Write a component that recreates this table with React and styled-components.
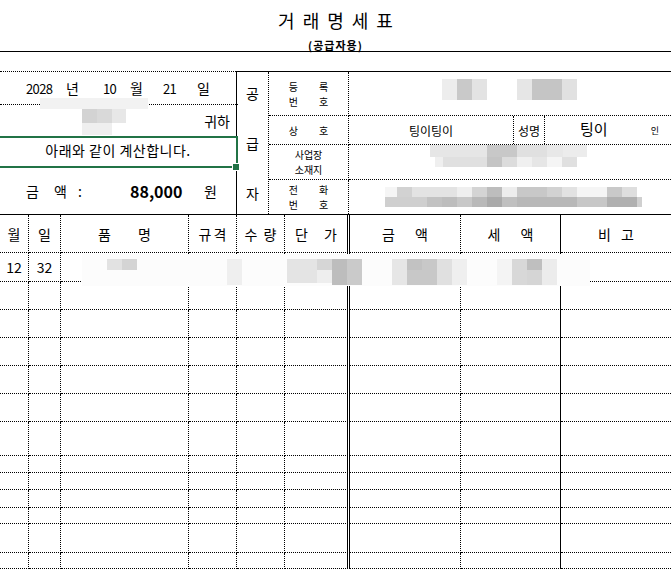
import React from 'react';
import styled, { createGlobalStyle } from 'styled-components';

const GlobalStyle = createGlobalStyle`
  html, body {
    margin: 0;
    padding: 0;
    background: #fff;
  }
  body {
    font-family: "Noto Sans CJK KR", "Noto Sans", sans-serif;
    color: #000;
    overflow: hidden;
  }
  * {
    box-sizing: border-box;
  }
`;

const Page = styled.div`
  position: relative;
  width: 671px;
  height: 569px;
  overflow: hidden;
`;

const TitleBlock = styled.header`
  height: 52px;
  border-bottom: 1px solid #000;
  display: flex;
  flex-direction: column;
  align-items: center;
  padding-top: 9px;
`;

const Title = styled.h1`
  margin: 0;
  padding-left: 8px;
  font-size: 18px;
  line-height: 22px;
  font-weight: 400;
  letter-spacing: 8px;
`;

const Subtitle = styled.div`
  margin-top: 8px;
  font-size: 11px;
  line-height: 13px;
  font-weight: 700;
  letter-spacing: 1px;
`;

const Upper = styled.section`
  margin-top: 19px;
  display: grid;
  grid-template-columns: 236px 1fr;
  border-bottom: 1px solid #000;
`;

const Buyer = styled.div`
  display: grid;
  grid-template-rows: 34px 31px 32px 46px;
  font-size: 14px;
`;

const DateRow = styled.div`
  border-top: 1px dotted #000;
  border-bottom: 1px dotted #000;
  display: grid;
  grid-template-columns: 40px 37px 27px 33px 34px auto;
  align-items: center;
  padding-left: 26px;
`;

const Num = styled.span`
  font-size: 13px;
  letter-spacing: -0.6px;
`;

const Recipient = styled.div`
  display: flex;
  align-items: center;
  justify-content: flex-end;
  padding-right: 8px;
`;

const Notice = styled.div`
  position: relative;
  z-index: 1;
  margin-left: -2px;
  width: 240px;
  border: 2px solid #217346;
  display: flex;
  align-items: center;
  justify-content: center;
  padding-bottom: 4px;
  letter-spacing: 0.5px;

  &::after {
    content: '';
    position: absolute;
    right: -4px;
    bottom: -5px;
    width: 6px;
    height: 6px;
    background: #217346;
    border: 1px solid #fff;
  }
`;

const AmountRow = styled.div`
  display: grid;
  grid-template-columns: 28px 24px 52px 74px auto;
  align-items: center;
  padding-left: 26px;
`;

const Total = styled.span`
  font-size: 16px;
  font-weight: 700;
`;

const Supplier = styled.div`
  border-left: 1px solid #000;
  border-top: 1px solid #000;
  display: grid;
  grid-template-columns: 32px 80px 1fr;
  grid-template-rows: 44px 29px 35px 34px;
`;

const SideLabel = styled.div`
  grid-row: 1 / span 4;
  border-right: 1px dotted #000;
  display: flex;
  flex-direction: column;
  justify-content: space-between;
  align-items: center;
  padding: 13px 0;
  font-size: 14px;
  line-height: 16px;
`;

const Label = styled.div`
  border-right: 1px dotted #000;
  border-bottom: ${(p) => (p.$last ? 'none' : '1px dotted #000')};
  display: flex;
  flex-direction: column;
  align-items: center;
  justify-content: center;
  font-size: 10px;
  line-height: 15px;
`;

const Spread = styled.span`
  display: flex;
  gap: ${(p) => p.$gap}px;
`;

const Value = styled.div`
  border-bottom: ${(p) => (p.$last ? 'none' : '1px dotted #000')};
`;

const NameRow = styled.div`
  height: 100%;
  display: grid;
  grid-template-columns: 165px 31px 1fr;
  font-size: 12px;
`;

const NameCell = styled.div`
  display: flex;
  align-items: center;
  justify-content: ${(p) => p.$align || 'center'};
  border-right: ${(p) => (p.$divider ? '1px dotted #000' : 'none')};
  padding-left: ${(p) => p.$pad || 0}px;
  padding-right: ${(p) => (p.$pad ? 12 : 0)}px;
`;

const Owner = styled.span`
  font-size: 15px;
  margin-bottom: 4px;
`;

const Seal = styled.span`
  margin-left: auto;
  font-size: 9px;
`;

const Table = styled.div`
  display: grid;
  grid-template-columns: 29px 32px 128px 48px 48px 65px 111px 100px 1fr;
  grid-template-rows: ${(p) => p.$rows.map((h) => `${h}px`).join(' ')};
  font-size: 14px;
`;

const edgeStyle = {
  dotted: '1px dotted #000',
  solid: '1px solid #000',
  double: '3px double #000',
  none: 'none',
};

const Cell = styled.div`
  border-bottom: 1px dotted #000;
  border-right: ${(p) => edgeStyle[p.$edge]};
  display: flex;
  align-items: center;
  justify-content: center;
`;

const Redactions = styled.svg`
  position: absolute;
  top: 0;
  left: 0;
  pointer-events: none;
`;

const edges = ['dotted', 'dotted', 'dotted', 'dotted', 'dotted', 'double', 'dotted', 'solid', 'none'];
const rowHeights = [38, 29, 28, 28, 28, 28, 28, 34, 17, 17, 18, 16, 29, 16];

const headers = [
  ['월'],
  ['일'],
  ['품', '명', 27],
  ['규', '격', 2],
  ['수', '량', 6],
  ['단', '가', 16],
  ['금', '액', 20],
  ['세', '액', 20],
  ['비', '고', 10],
];

const firstRow = ['12', '32'];

// pixelated (redacted) areas: x, y, w, h, colour
const blocks = [
  [40, 98, 108, 11, '#f2f2f2'],
  [82, 109, 15, 14, '#d3d3d3'],
  [97, 109, 15, 14, '#d9d9d9'],
  [112, 109, 14, 14, '#e7e7e7'],
  [82, 123, 30, 12, '#efefef'],

  [442, 79, 15, 21, '#ededed'],
  [457, 79, 15, 21, '#c9c9c9'],
  [472, 79, 15, 21, '#e3e3e3'],
  [517, 79, 15, 21, '#e6e6e6'],
  [532, 79, 30, 21, '#c5c5c5'],
  [562, 79, 15, 21, '#e1e1e1'],

  [430, 145, 57, 12, '#e6e6e6'],
  [487, 145, 30, 12, '#c8c8c8'],
  [517, 145, 30, 12, '#e0e0e0'],
  [547, 145, 16, 12, '#e8e8e8'],
  [563, 145, 24, 12, '#ececec'],
  [435, 157, 8, 10, '#efefef'],
  [443, 157, 44, 10, '#e0e0e0'],
  [487, 157, 15, 10, '#c4c4c4'],
  [502, 157, 15, 10, '#dcdcdc'],
  [517, 157, 15, 10, '#f0f0f0'],
  [532, 157, 15, 10, '#e6e6e6'],
  [547, 157, 15, 10, '#f5f5f5'],
  [562, 157, 15, 10, '#e0e0e0'],

  [385, 187, 12, 10, '#f5f5f5'],
  [397, 187, 15, 10, '#d2d2d2'],
  [412, 187, 45, 10, '#e3e3e3'],
  [457, 187, 15, 10, '#efefef'],
  [472, 187, 15, 10, '#d4d4d4'],
  [487, 187, 15, 10, '#bdbdbd'],
  [502, 187, 15, 10, '#ededed'],
  [517, 187, 30, 10, '#c8c8c8'],
  [547, 187, 15, 10, '#d2d2d2'],
  [562, 187, 15, 10, '#e2e2e2'],
  [577, 187, 30, 10, '#f5f5f5'],
  [607, 187, 15, 10, '#c9c9c9'],
  [622, 187, 15, 10, '#dedede'],
  [385, 197, 42, 10, '#cfcfcf'],
  [427, 197, 15, 10, '#c2c2c2'],
  [442, 197, 15, 10, '#bdbdbd'],
  [457, 197, 15, 10, '#c8c8c8'],
  [472, 197, 15, 10, '#b9b9b9'],
  [487, 197, 15, 10, '#aaaaaa'],
  [502, 197, 15, 10, '#c0c0c0'],
  [517, 197, 60, 10, '#b8b8b8'],
  [577, 197, 30, 10, '#c7c7c7'],
  [607, 197, 30, 10, '#b0b0b0'],
  [637, 197, 5, 10, '#d0d0d0'],

  [82, 254, 508, 32, '#fcfcfc'],
  [107, 259, 15, 11, '#e2e2e2'],
  [122, 259, 15, 11, '#d4d4d4'],
  [227, 259, 15, 26, '#efefef'],
  [287, 259, 30, 24, '#e4e4e4'],
  [317, 259, 15, 11, '#d6d6d6'],
  [317, 270, 15, 13, '#eeeeee'],
  [332, 259, 15, 26, '#bdbdbd'],
  [347, 259, 15, 26, '#cacaca'],
  [392, 259, 15, 26, '#e6e6e6'],
  [407, 259, 15, 11, '#c2c2c2'],
  [407, 270, 15, 15, '#c8c8c8'],
  [422, 259, 15, 26, '#c8c8c8'],
  [437, 259, 15, 26, '#e0e0e0'],
  [452, 259, 15, 26, '#efefef'],
  [497, 259, 15, 26, '#f4f4f4'],
  [512, 259, 15, 26, '#d8d8d8'],
  [527, 259, 15, 11, '#bfbfbf'],
  [527, 270, 15, 15, '#d5d5d5'],
  [542, 259, 15, 26, '#ececec'],
];

const Head = ({ item }) => {
  const [a, b, gap] = item;
  if (!b) return <span>{a}</span>;
  return (
    <Spread $gap={gap}>
      <span>{a}</span>
      <span>{b}</span>
    </Spread>
  );
};

const App = () => {
  return (
    <>
      <GlobalStyle />
      <Page>
        <TitleBlock>
          <Title>거래명세표</Title>
          <Subtitle>(공급자용)</Subtitle>
        </TitleBlock>

        <Upper>
          <Buyer>
            <DateRow>
              <Num>2028</Num>
              <span>년</span>
              <Num>10</Num>
              <span>월</span>
              <Num>21</Num>
              <span>일</span>
            </DateRow>
            <Recipient>귀하</Recipient>
            <Notice>아래와 같이 계산합니다.</Notice>
            <AmountRow>
              <span>금</span>
              <span>액</span>
              <span>:</span>
              <Total>88,000</Total>
              <span>원</span>
            </AmountRow>
          </Buyer>

          <Supplier>
            <SideLabel>
              <span>공</span>
              <span>급</span>
              <span>자</span>
            </SideLabel>

            <Label>
              <Spread $gap={21}><span>등</span><span>록</span></Spread>
              <Spread $gap={21}><span>번</span><span>호</span></Spread>
            </Label>
            <Value />

            <Label>
              <Spread $gap={21}><span>상</span><span>호</span></Spread>
            </Label>
            <Value>
              <NameRow>
                <NameCell $divider>팅이팅이</NameCell>
                <NameCell $divider>성명</NameCell>
                <NameCell $align="flex-start" $pad={35}>
                  <Owner>팅이</Owner>
                  <Seal>인</Seal>
                </NameCell>
              </NameRow>
            </Value>

            <Label>
              <span>사업장</span>
              <span>소재지</span>
            </Label>
            <Value />

            <Label $last>
              <Spread $gap={21}><span>전</span><span>화</span></Spread>
              <Spread $gap={21}><span>번</span><span>호</span></Spread>
            </Label>
            <Value $last />
          </Supplier>
        </Upper>

        <Table $rows={rowHeights}>
          {rowHeights.map((_, r) =>
            edges.map((edge, c) => (
              <Cell key={`${r}-${c}`} $edge={edge}>
                {r === 0 && <Head item={headers[c]} />}
                {r === 1 && firstRow[c]}
              </Cell>
            ))
          )}
        </Table>

        <Redactions width="671" height="569" viewBox="0 0 671 569">
          {blocks.map(([x, y, w, h, fill], i) => (
            <rect key={i} x={x} y={y} width={w} height={h} fill={fill} />
          ))}
        </Redactions>
      </Page>
    </>
  );
};

export default App;
